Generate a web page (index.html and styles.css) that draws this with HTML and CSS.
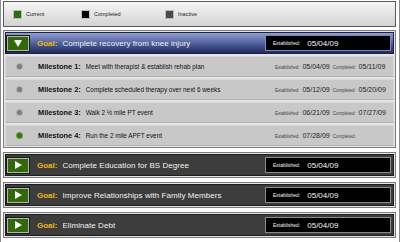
FILE: index.html
```html
<!DOCTYPE html>
<html lang="en">
<head>
  <meta charset="UTF-8" />
  <meta name="viewport" content="width=device-width, initial-scale=1" />
  <title>Goals</title>
  <link rel="stylesheet" href="styles.css">
</head>
<body>
<div class="page">
  <div class="legend">
    <span class="legend-item item-current"><i class="swatch swatch-current"></i>Current</span>
    <span class="legend-item item-completed"><i class="swatch swatch-completed"></i>Completed</span>
    <span class="legend-item"><i class="swatch swatch-inactive"></i>Inactive</span>
  </div>

  <div class="goals">
    <section class="goal goal-open">
      <div class="goal-head">
        <button class="toggle" aria-label="Collapse goal">
          <svg width="8" height="7" viewBox="0 0 8 7"><polygon points="0,0 8,0 4,7" fill="#fff"/></svg>
        </button>
        <span class="goal-label">Goal:</span>
        <span class="goal-title">Complete recovery from knee injury</span>
        <div class="est-box"><span class="est-label">Established:</span><span class="est-date">05/04/09</span></div>
      </div>
      <ul class="milestones">
        <li class="milestone">
          <span class="dot"></span>
          <span class="ms-label">Milestone 1:</span>
          <span class="ms-text">Meet with therapist &amp; establish rehab plan</span>
          <span class="ms-dates"><small>Established:</small> 05/04/09 <small>Completed:</small> 05/11/09</span>
        </li>
        <li class="milestone">
          <span class="dot"></span>
          <span class="ms-label">Milestone 2:</span>
          <span class="ms-text">Complete scheduled therapy over next 6 weeks</span>
          <span class="ms-dates"><small>Established:</small> 05/12/09 <small>Completed:</small> 05/20/09</span>
        </li>
        <li class="milestone">
          <span class="dot"></span>
          <span class="ms-label">Milestone 3:</span>
          <span class="ms-text">Walk 2 ½ mile PT event</span>
          <span class="ms-dates"><small>Established:</small> 06/21/09 <small>Completed:</small> 07/27/09</span>
        </li>
        <li class="milestone">
          <span class="dot dot-current"></span>
          <span class="ms-label">Milestone 4:</span>
          <span class="ms-text">Run the 2 mile APFT event</span>
          <span class="ms-dates"><small>Established:</small> 07/28/09 <small>Completed:</small></span>
        </li>
      </ul>
    </section>

    <section class="goal">
      <div class="goal-head">
        <button class="toggle" aria-label="Expand goal">
          <svg width="7" height="8" viewBox="0 0 7 8"><polygon points="0,0 7,4 0,8" fill="#fff"/></svg>
        </button>
        <span class="goal-label">Goal:</span>
        <span class="goal-title">Complete Education for BS Degree</span>
        <div class="est-box"><span class="est-label">Established:</span><span class="est-date">05/04/09</span></div>
      </div>
    </section>

    <section class="goal">
      <div class="goal-head">
        <button class="toggle" aria-label="Expand goal">
          <svg width="7" height="8" viewBox="0 0 7 8"><polygon points="0,0 7,4 0,8" fill="#fff"/></svg>
        </button>
        <span class="goal-label">Goal:</span>
        <span class="goal-title">Improve Relationships with Family Members</span>
        <div class="est-box"><span class="est-label">Established:</span><span class="est-date">05/04/09</span></div>
      </div>
    </section>

    <section class="goal">
      <div class="goal-head">
        <button class="toggle" aria-label="Expand goal">
          <svg width="7" height="8" viewBox="0 0 7 8"><polygon points="0,0 7,4 0,8" fill="#fff"/></svg>
        </button>
        <span class="goal-label">Goal:</span>
        <span class="goal-title">Eliminate Debt</span>
        <div class="est-box"><span class="est-label">Established:</span><span class="est-date">05/04/09</span></div>
      </div>
    </section>
  </div>
</div>
</body>
</html>
```

FILE: styles.css
```css
body {
  margin: 0;
  font-family: 'Liberation Sans', Arial, sans-serif;
  background: #fff;
  color: #111;
}
.page {
  width: 400px;
  height: 242px;
  box-sizing: border-box;
  padding: 1px 3px 0 2px;
  border-left: 1px solid #8c8c8c;
  border-right: 1px solid #8c8c8c;
}
.legend {
  height: 26px;
  box-sizing: border-box;
  border: 1px solid #5a5a5a;
  background: linear-gradient(#f6f6f6, #d2d2d2);
  display: flex;
  align-items: center;
  padding-left: 9px;
}
.legend-item {
  display: flex;
  align-items: center;
  gap: 4px;
  font-size: 5.5px;
  color: #222;
}
.item-current { width: 68px; }
.item-completed { width: 84px; }
.swatch {
  width: 9px;
  height: 9px;
  box-sizing: border-box;
  border: 1px solid #bbb;
}
.swatch-current { background: #2c6f0a; }
.swatch-completed { background: #000; }
.swatch-inactive { background: #4a4a4a; }

.goals {
  margin-top: 3px;
  display: flex;
  flex-direction: column;
  gap: 4px;
}
.goal {
  border: 1px solid #7c7c7c;
  background: #e4e4e4;
  padding: 1px;
}
.goal-head {
  height: 22px;
  box-sizing: border-box;
  border: 1px solid #1e1e1e;
  background: #3d3d3d;
  display: flex;
  align-items: center;
  padding: 0 2px 0 1px;
  color: #f2f2f2;
}
.goal-open .goal-head {
  border-color: #1b2246;
  background: linear-gradient(#8f9fd2, #4c5c98 55%, #1f2a5b);
}
.toggle {
  width: 22px;
  height: 15px;
  padding: 0;
  border: 1px solid #b5b5b5;
  outline: 1px solid #1a1a1a;
  background: #2f6a06;
  display: flex;
  align-items: center;
  justify-content: center;
  cursor: pointer;
}
.goal-label {
  margin-left: 8px;
  font-weight: 700;
  font-size: 8px;
  color: #f2b705;
}
.goal-title {
  margin-left: 5px;
  font-size: 8px;
  letter-spacing: 0.05px;
}
.est-box {
  margin-left: auto;
  width: 126px;
  height: 16px;
  box-sizing: border-box;
  border: 1px solid #8a8a8a;
  background: #000;
  display: flex;
  align-items: center;
  padding-left: 7px;
  gap: 7px;
}
.goal-open .est-box { border-color: #7888c4; }
.est-label { font-size: 5px; }
.est-date { font-size: 8px; }

.milestones {
  list-style: none;
  margin: 2px 0 0;
  padding: 0;
  display: flex;
  flex-direction: column;
  gap: 2px;
}
.milestone {
  height: 21px;
  box-sizing: border-box;
  border: 1px solid #d6d6d6;
  border-bottom-color: #b4b4b4;
  background: #c8c8c8;
  display: flex;
  align-items: center;
  padding-left: 11px;
}
.dot {
  width: 5px;
  height: 5px;
  border-radius: 50%;
  background: #7e7e7e;
  box-shadow: 0 0 0 1px #b0b0b0;
}
.dot-current {
  background: #2d7a08;
  box-shadow: 0 0 0 1px #6a9a50;
}
.ms-label {
  margin-left: 16px;
  font-weight: 700;
  font-size: 7.4px;
}
.ms-text {
  margin-left: 5px;
  font-size: 6.4px;
}
.ms-dates {
  margin-left: auto;
  width: 118px;
  font-size: 7px;
  color: #222;
  word-spacing: 1px;
}
.ms-dates small {
  font-size: 4.5px;
  color: #444;
}
```
